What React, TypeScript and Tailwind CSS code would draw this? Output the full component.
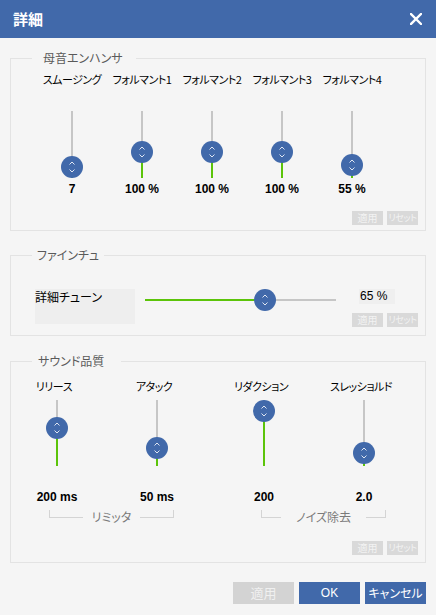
import React from 'react';

const jp = "font-['Noto_Sans_CJK_JP',sans-serif] [font-feature-settings:'palt']";
const num = "font-['Liberation_Sans','Noto_Sans_CJK_JP',sans-serif]";

function Thumb() {
  return (
    <div className="w-[22px] h-[22px] rounded-full bg-[#4169aa]">
      <svg width="22" height="22" viewBox="0 0 22 22" fill="none">
        <path d="M8.5 8.5 L11 6 L13.5 8.5" stroke="#dfe6f2" strokeWidth="1" />
        <path d="M8.5 13.5 L11 16 L13.5 13.5" stroke="#dfe6f2" strokeWidth="1" />
      </svg>
    </div>
  );
}

function VSlider({ pos, h }: { pos: number; h: string }) {
  return (
    <div className={`relative w-[22px] ${h}`}>
      <div className="absolute left-[10px] top-0 bottom-0 w-[2px] bg-[#c6c6c6]" />
      <div className="absolute left-[10px] bottom-0 w-[2px] bg-[#5cc40a]" style={{ top: pos }} />
      <div className="absolute left-0" style={{ top: pos - 11 }}>
        <Thumb />
      </div>
    </div>
  );
}

function SmallButtons() {
  return (
    <div className={`flex justify-end gap-[4px] pr-[7px] ${jp}`}>
      <div className="w-[31px] h-[14px] bg-[#d9d9d9] text-[#f3f3f3] text-[10px] leading-[14px] text-center">適用</div>
      <div className="w-[31px] h-[14px] bg-[#d9d9d9] text-[#f3f3f3] text-[9px] tracking-[-0.4px] leading-[14px] text-center whitespace-nowrap">リセット</div>
    </div>
  );
}

function Bracket({ label, w, px }: { label: string; w: string; px: string }) {
  return (
    <div className={`flex items-start h-[16px] ${w}`}>
      <div className="flex-1 mt-[1px] h-[8px] border-l border-b border-[#d4d4d4]" />
      <span className={`text-[12px] leading-[16px] text-[#7a7a7a] ${px}`}>{label}</span>
      <div className="flex-1 mt-[1px] h-[8px] border-r border-b border-[#d4d4d4]" />
    </div>
  );
}

export default function App() {
  const enhancer = [
    { label: 'スムージング', value: '7', pos: 56 },
    { label: 'フォルマント1', value: '100 %', pos: 41 },
    { label: 'フォルマント2', value: '100 %', pos: 41 },
    { label: 'フォルマント3', value: '100 %', pos: 41 },
    { label: 'フォルマント4', value: '55 %', pos: 54 },
  ];

  const sound = [
    { label: 'リリース', value: '200 ms', pos: 28, ml: '' },
    { label: 'アタック', value: '50 ms', pos: 48, ml: 'ml-[20px]' },
    { label: 'リダクション', value: '200', pos: 11, ml: 'ml-[27px]' },
    { label: 'スレッショルド', value: '2.0', pos: 53, ml: 'ml-[20px]' },
  ];

  return (
    <div className={`w-[436px] h-[615px] overflow-hidden bg-[#f5f5f5] text-black ${jp}`}>
      {/* title bar */}
      <div className="h-[38px] bg-[#4169aa] flex items-center justify-between pl-[13px] pr-[14px]">
        <span className="text-white text-[15px] font-bold">詳細</span>
        <svg width="12" height="12" viewBox="0 0 12 12">
          <path d="M1 1 L11 11 M11 1 L1 11" stroke="#fff" strokeWidth="2.4" strokeLinecap="square" />
        </svg>
      </div>

      {/* 母音エンハンサ */}
      <fieldset className="mx-[10px] mt-[12px] border border-[#e3e3e3]">
        <legend className="ml-[21px] pl-[11px] pr-[13px] text-[12px] leading-[16px] text-[#5a5a5a]">母音エンハンサ</legend>
        <div className="flex pl-[26px] pt-[5px]">
          {enhancer.map((s) => (
            <div key={s.label} className="w-[70px] flex flex-col items-center">
              <div className="text-[11px] tracking-[-0.5px] leading-[16px] whitespace-nowrap">{s.label}</div>
              <div className="mt-[24px]">
                <VSlider pos={s.pos} h="h-[67px]" />
              </div>
              <div className={`mt-[3px] text-[12px] leading-[16px] font-bold ${num}`}>{s.value}</div>
            </div>
          ))}
        </div>
        <div className="mt-[14px] pb-[5px]">
          <SmallButtons />
        </div>
      </fieldset>

      {/* ファインチュ */}
      <fieldset className="mx-[10px] mt-[16px] border border-[#e3e3e3]">
        <legend className="ml-[21px] pl-[5px] pr-[5px] text-[12px] leading-[16px] text-[#5a5a5a]">ファインチュ</legend>
        <div className="flex pl-[24px] pt-[26px] pb-[8px]">
          <div className="w-[100px] h-[35px] bg-[#eeeeee] text-[12px] leading-[16px]">詳細チューン</div>
          <div className="flex-1 ml-[10px]">
            <div className="flex items-start">
              <div className="relative w-[191px] h-[22px]">
                <div className="absolute left-0 right-0 top-[10px] h-[2px] bg-[#c6c6c6]" />
                <div className="absolute left-0 top-[10px] h-[2px] w-[120px] bg-[#5cc40a]" />
                <div className="absolute left-[109px] top-0">
                  <Thumb />
                </div>
              </div>
              <div className={`ml-[23px] w-[36px] h-[15px] bg-[#efefef] pl-[1px] text-[12px] leading-[15px] ${num}`}>65 %</div>
            </div>
            <div className="mt-[2px]">
              <SmallButtons />
            </div>
          </div>
        </div>
      </fieldset>

      {/* サウンド品質 */}
      <fieldset className="mx-[10px] mt-[17px] border border-[#e3e3e3]">
        <legend className="ml-[21px] pl-[6px] pr-[17px] text-[12px] leading-[16px] text-[#5a5a5a]">サウンド品質</legend>
        <div className="flex pl-[6px] pt-[9px]">
          {sound.map((s) => (
            <div key={s.label} className={`w-[80px] flex flex-col items-center ${s.ml}`}>
              <div className="text-[11px] tracking-[-0.5px] leading-[16px] whitespace-nowrap pr-[6px]">{s.label}</div>
              <div className="mt-[6px]">
                <VSlider pos={s.pos} h="h-[66px]" />
              </div>
              <div className={`mt-[23px] text-[12px] leading-[16px] font-bold ${num}`}>{s.value}</div>
            </div>
          ))}
        </div>
        <div className="flex mt-[4px] ml-[38px]">
          <Bracket label="リミッタ" w="w-[125px]" px="px-[9px]" />
          <div className="ml-[87px]">
            <Bracket label="ノイズ除去" w="w-[125px]" px="px-[15px]" />
          </div>
        </div>
        <div className="mt-[16px] pb-[7px]">
          <SmallButtons />
        </div>
      </fieldset>

      {/* footer buttons */}
      <div className="flex justify-end gap-[5px] pr-[10px] mt-[19px]">
        <div className="w-[61px] h-[22px] bg-[#d3d3d3] text-[#f0f0f0] text-[13px] leading-[22px] text-center">適用</div>
        <div className={`w-[61px] h-[22px] bg-[#4169aa] text-white text-[12px] leading-[22px] text-center ${num}`}>OK</div>
        <div className="w-[61px] h-[22px] bg-[#4169aa] text-white text-[12px] leading-[22px] text-center">キャンセル</div>
      </div>
    </div>
  );
}
